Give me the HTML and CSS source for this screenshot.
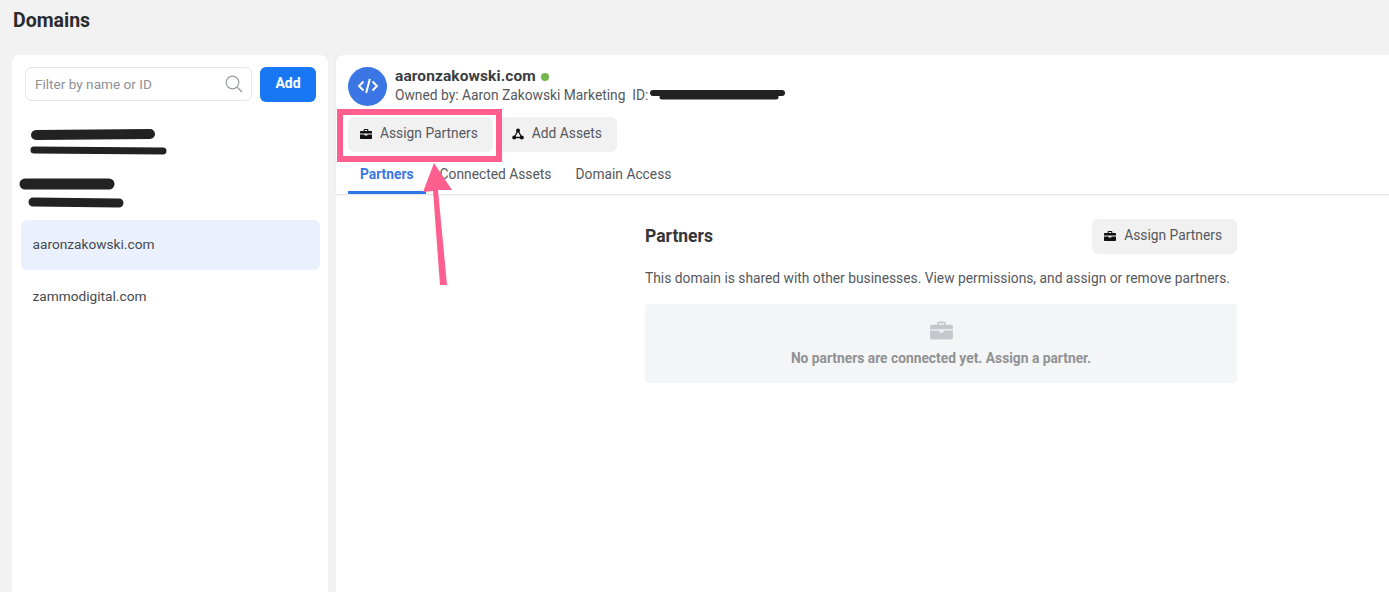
FILE: index.html
```html
<!DOCTYPE html>
<html lang="en">
<head>
<meta charset="utf-8">
<title>Domains</title>
<link rel="stylesheet" href="styles.css">
</head>
<body>
<div class="page">
  <h1 class="page-title">Domains</h1>
  <div class="columns">
    <aside class="sidebar">
      <div class="filter-row">
        <div class="filter">
          <span class="filter-text">Filter by name or ID</span>
          <svg class="search-icon" viewBox="0 0 18 18" width="18" height="18"><circle cx="7.5" cy="7.5" r="6.3" fill="none" stroke="#9a9da1" stroke-width="1.2"/><path d="M12 12l5 5" stroke="#9a9da1" stroke-width="1.4" fill="none"/></svg>
        </div>
        <button class="add-btn"><span class="lift">Add</span></button>
      </div>
      <div class="redacted-row"></div>
      <div class="redacted-row"></div>
      <div class="domain-row selected">aaronzakowski.com</div>
      <div class="domain-row">zammodigital.com</div>
    </aside>
    <main class="detail">
      <header class="detail-head">
        <div class="identity">
          <div class="avatar">
            <svg viewBox="0 0 24 24" width="24" height="24"><path d="M7.500 7.500L3 12l4.500 4.500M16.500 7.500L21 12l-4.500 4.500M13.800 5l-3.600 14" fill="none" stroke="#fff" stroke-width="2"/></svg>
          </div>
          <div class="identity-text">
            <div class="name-line"><span class="name">aaronzakowski.com</span><span class="status-dot"></span></div>
            <div class="owner">Owned by: Aaron Zakowski Marketing&nbsp;&nbsp;ID:</div>
          </div>
        </div>
        <div class="actions">
          <button class="btn">
            <svg class="btn-icon" viewBox="0 0 12 10" width="12" height="10"><path d="M3.600 2V1.200C3.600.5 4.100 0 4.800 0h2.400c.7 0 1.200.5 1.200 1.200V2H11c.6 0 1 .4 1 1v1.600H0V3c0-.6.4-1 1-1h2.600zM4.700 2h2.600V1.100H4.700V2zM0 5.400h4.600v1h2.800v-1H12V9c0 .6-.4 1-1 1H1c-.6 0-1-.4-1-1V5.400z" fill="#111"/></svg>
            Assign Partners
          </button>
          <button class="btn">
            <svg class="btn-icon" viewBox="0 0 12 12" width="12" height="12"><path d="M6 2.500L2.200 9.500h7.600z" fill="none" stroke="#111" stroke-width="1.300"/><circle cx="6" cy="2.600" r="2" fill="#111"/><circle cx="2.200" cy="9.500" r="2" fill="#111"/><circle cx="9.800" cy="9.500" r="2" fill="#111"/></svg>
            Add Assets
          </button>
        </div>
        <nav class="tabs">
          <a class="tab active">Partners</a>
          <a class="tab">Connected Assets</a>
          <a class="tab">Domain Access</a>
        </nav>
      </header>
      <section class="panel">
        <div class="panel-head">
          <h2 class="panel-title">Partners</h2>
          <button class="btn">
            <svg class="btn-icon" viewBox="0 0 12 10" width="12" height="10"><path d="M3.600 2V1.200C3.600.5 4.100 0 4.800 0h2.400c.7 0 1.200.5 1.200 1.200V2H11c.6 0 1 .4 1 1v1.600H0V3c0-.6.4-1 1-1h2.600zM4.700 2h2.600V1.100H4.700V2zM0 5.400h4.600v1h2.800v-1H12V9c0 .6-.4 1-1 1H1c-.6 0-1-.4-1-1V5.400z" fill="#111"/></svg>
            Assign Partners
          </button>
        </div>
        <p class="panel-desc">This domain is shared with other businesses. View permissions, and assign or remove partners.</p>
        <div class="empty">
          <svg viewBox="0 0 24 20" width="23" height="19"><path d="M7.500 4V2.500C7.500 1.400 8.400.6 9.500.6h5c1.100 0 2 .8 2 1.900V4H22c1.100 0 2 .9 2 2v2.800H0V6c0-1.100.9-2 2-2h5.500zM9.300 4h5.400V2.400H9.300V4zM0 10h10v2h4v-2h10v7.500c0 1.100-.9 2-2 2H2c-1.100 0-2-.9-2-2V10z" fill="#c4c7cb"/></svg>
          <div class="empty-text">No partners are connected yet. Assign a partner.</div>
        </div>
      </section>
    </main>
  </div>
</div>
<svg class="markup" viewBox="0 0 1389 592" width="1389" height="592">
  <g fill="none" stroke="#222" stroke-linecap="round">
    <path d="M36 135L150 134" stroke-width="10"/>
    <path d="M34 150L163 151" stroke-width="7"/>
    <path d="M25 184L109 184" stroke-width="11"/>
    <path d="M33 202L119 203" stroke-width="9"/>
    <path d="M653 93L782 93" stroke-width="6"/>
    <path d="M662 97L776 97" stroke-width="5"/>
  </g>
  <rect x="340" y="112" width="159" height="47" fill="none" stroke="#ff5f8f" stroke-width="6"/>
  <path d="M434 163L452 190H438L447 285L440 285L433 191L423 192Z" fill="#ff5f8f"/>
</svg>
</body>
</html>
```
FILE: styles.css
```css
* { box-sizing: border-box; }
html, body { margin: 0; height: 100%; }
body {
  background: #f2f2f2;
  font-family: Roboto, "Liberation Sans", sans-serif;
  color: #444950;
  overflow: hidden;
  position: relative;
}
.page { height: 592px; display: flex; flex-direction: column; }
.page-title {
  margin: 0;
  height: 55px;
  padding: 10px 0 0 13px;
  font-size: 19.5px;
  line-height: 22px;
  font-weight: 700;
  color: #282b30;
}
.columns { flex: 1; display: flex; gap: 8px; padding-left: 12px; min-height: 0; }
.sidebar {
  width: 316px;
  flex: none;
  background: #fff;
  border-radius: 8px 8px 0 0;
  padding: 12px 8px 0 9px;
}
.filter-row { display: flex; gap: 8px; padding-left: 4px; margin-right: 4px; align-items: flex-start; }
.filter {
  flex: 1;
  height: 34px;
  border: 1px solid #e6e7e9;
  border-radius: 6px;
  display: flex;
  align-items: center;
  justify-content: space-between;
  padding: 0 8px 0 9px;
  background: #fff;
}
.filter-text { font-size: 13.6px; color: #8d9095; }
.add-btn {
  width: 56px;
  height: 35px;
  border: 0;
  border-radius: 6px;
  background: #1877f2;
  color: #fff;
  font: 700 14px Roboto, "Liberation Sans", sans-serif;
  padding: 0 0 3px;
}
.redacted-row { height: 55px; }
.redacted-row:nth-of-type(2) { margin-top: 9px; }
.redacted-row + .redacted-row { height: 54px; }
.domain-row {
  height: 50px;
  margin-bottom: 2px;
  padding: 0 12px 2px 11.5px;
  border-radius: 6px;
  display: flex;
  align-items: center;
  font-size: 13.7px;
  color: #444950;
}
.domain-row.selected { background: #eaf1fd; }
.detail {
  flex: 1;
  background: #fff;
  border-radius: 8px 0 0 0;
  min-width: 0;
}
.detail-head {
  height: 140px;
  padding: 12px 0 0 12px;
  border-bottom: 1px solid #e6e6e6;
  box-shadow: 0 1px 2px rgba(0,0,0,.05);
  display: flex;
  flex-direction: column;
}
.identity { display: flex; gap: 8px; align-items: center; height: 38px; }
.avatar {
  width: 39px;
  height: 39px;
  border-radius: 50%;
  background: #3b76e4;
  display: flex;
  align-items: center;
  justify-content: center;
  flex: none;
}
.name-line { display: flex; align-items: center; gap: 5px; }
.name { font-size: 15.5px; line-height: 19px; font-weight: 700; color: #3a3d42; letter-spacing: .1px; }
.status-dot { width: 8px; height: 8px; border-radius: 50%; background: #72b84a; }
.owner { font-size: 13.8px; line-height: 19px; color: #55585d; }
.actions { display: flex; gap: 7px; margin-top: 12px; }
.btn {
  height: 35px;
  border: 0;
  border-radius: 6px;
  background: #f1f1f1;
  color: #55585d;
  font: 400 13.8px Roboto, "Liberation Sans", sans-serif;
  padding: 0 15px 3px 12px;
  display: flex;
  align-items: center;
  gap: 8px;
}
.btn-icon { flex: none; position: relative; top: 1px; }
.tabs { display: flex; gap: 24px; margin-top: 5px; flex: 1; }
.tab {
  font-size: 13.8px;
  color: #55585d;
  display: flex;
  align-items: center;
  height: 100%;
  border-bottom: 3px solid transparent;
  padding: 0 0 1px;
}
.tab.active {
  color: #3b76e4;
  font-weight: 700;
  border-bottom-color: #2d78e8;
  padding: 0 12px 1px;
  margin-right: -10px;
}
.panel { width: 592px; margin-left: 309px; padding-top: 24px; }
.panel-head { display: flex; justify-content: space-between; align-items: center; }
.panel-title { margin: 0; font-size: 17.5px; font-weight: 700; color: #33363b; position: relative; top: -1px; }
.panel-desc { margin: 14px 0 16px; font-size: 13.8px; line-height: 20px; color: #55585d; }
.empty {
  height: 79px;
  background: #f4f5f7;
  border-radius: 4px;
  display: flex;
  flex-direction: column;
  align-items: center;
  padding-top: 17px;
}
.empty-text { margin-top: 10px; font-size: 13.8px; font-weight: 700; color: #909294; }
.markup { position: absolute; left: 0; top: 0; pointer-events: none; }
```
